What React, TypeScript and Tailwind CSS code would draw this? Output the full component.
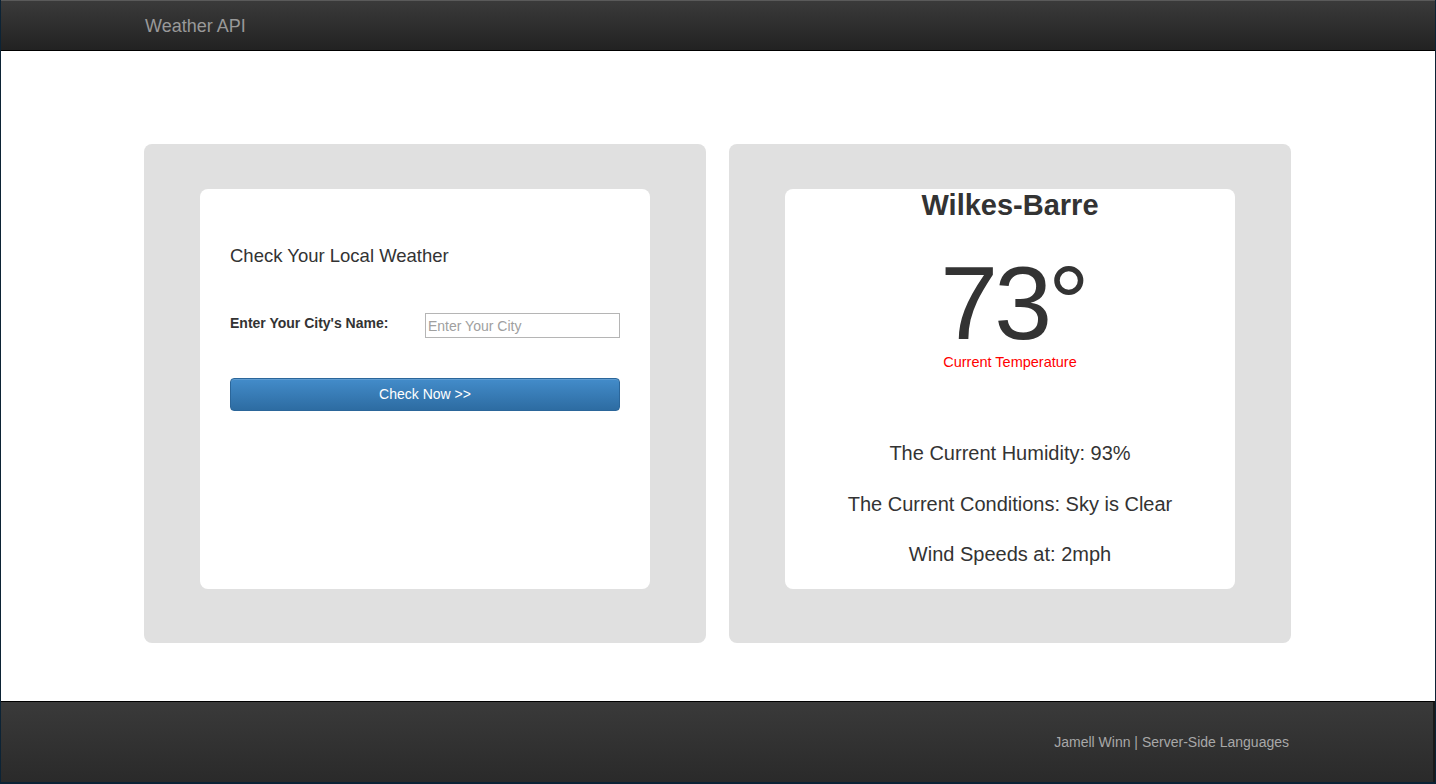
import React from 'react'

const font = { fontFamily: '"Liberation Sans", Arial, sans-serif' }

const App: React.FC = () => {
  return (
    <div className="h-screen w-full bg-[#0c2335] overflow-hidden" style={font}>
      <div className="mx-[1px] flex flex-col">
        {/* Navbar */}
        <div className="h-[51px] bg-gradient-to-b from-[#3a3a3a] to-[#222222] border-t border-t-[#5a5a5a] border-b border-b-black">
          <div className="pl-[144px] h-full flex items-center">
            <span className="text-[18px] text-[#999999] leading-none">Weather API</span>
          </div>
        </div>

        {/* Main */}
        <div className="bg-white h-[650px] pt-[93px] pl-[143px] flex gap-[23px]">
          {/* Left panel */}
          <div className="w-[562px] h-[499px] bg-[#e0e0e0] rounded-[8px] pt-[45px] px-[56px]">
            <div className="w-[450px] h-[400px] bg-white rounded-[8px] pt-[55px] px-[30px]">
              <h2 className="text-[18.5px] leading-[24px] text-[#333333]">Check Your Local Weather</h2>
              <div className="mt-[45px] flex items-start">
                <label className="w-[195px] text-[14px] leading-[20px] font-bold text-[#333333]">
                  Enter Your City's Name:
                </label>
                <input
                  type="text"
                  placeholder="Enter Your City"
                  className="w-[195px] h-[25px] border border-[#b5b5b5] px-[2px] text-[14px] text-[#333] placeholder:text-[#a0a0a0] outline-none"
                  style={font}
                />
              </div>
              <button
                className="mt-[40px] w-full h-[33px] rounded-[4px] bg-gradient-to-b from-[#438cca] to-[#2d6ca2] border border-[#2b669a] text-white text-[14px] shadow-[inset_0_1px_0_rgba(255,255,255,0.15)]"
                style={font}
              >
                Check Now &gt;&gt;
              </button>
            </div>
          </div>

          {/* Right panel */}
          <div className="w-[562px] h-[499px] bg-[#e0e0e0] rounded-[8px] pt-[45px] px-[56px]">
            <div className="w-[450px] h-[400px] bg-white rounded-[8px] flex flex-col items-center text-[#333333]">
              <h1 className="text-[29px] leading-[32px] font-bold">Wilkes-Barre</h1>
              <div className="mt-[32px] text-[104px] leading-[100px] tracking-[-4px] pl-[6px]">73°</div>
              <p className="text-[14.5px] leading-[18px] text-[#ff0000]">Current Temperature</p>
              <p className="mt-[68px] text-[20px] leading-[28px]">The Current Humidity: 93%</p>
              <p className="mt-[23px] text-[20px] leading-[28px]">The Current Conditions: Sky is Clear</p>
              <p className="mt-[22px] text-[20px] leading-[28px]">Wind Speeds at: 2mph</p>
            </div>
          </div>
        </div>

        {/* Footer */}
        <div className="h-[81px] bg-gradient-to-b from-[#3a3a3a] to-[#2a2a2a] border-t border-t-black border-r-2 border-r-[#1a1a1a]">
          <div className="h-full flex items-center justify-end pr-[144px] pt-[1px]">
            <span className="text-[14px] text-[#a8a8a8]">Jamell Winn | Server-Side Languages</span>
          </div>
        </div>
      </div>
    </div>
  )
}

export default App
